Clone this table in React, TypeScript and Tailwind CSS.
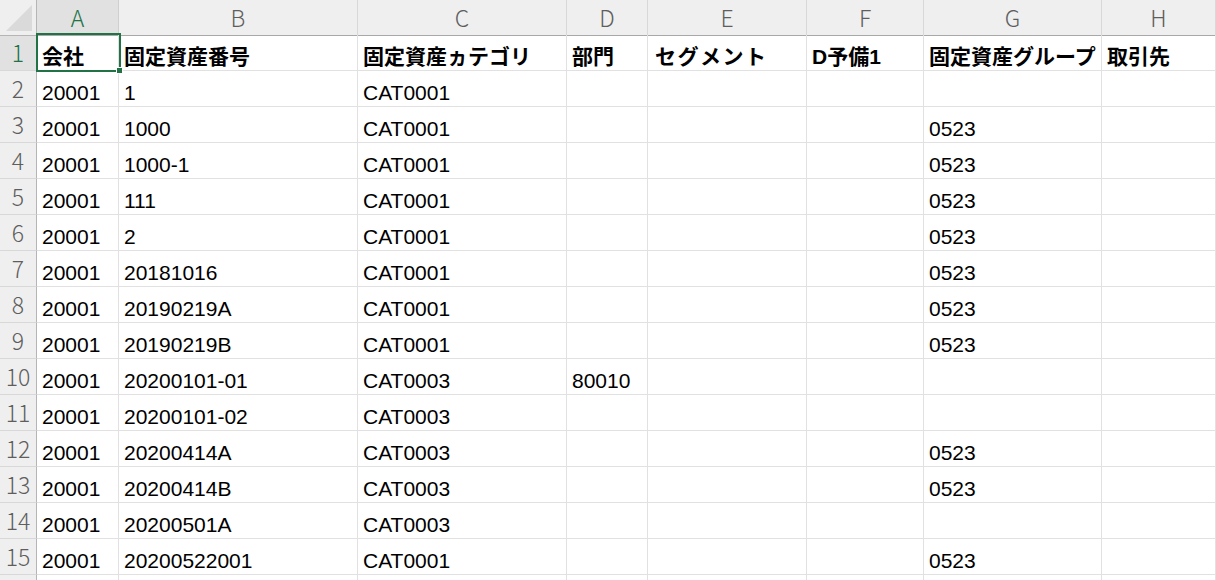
import React from "react";

const cols = ["A", "B", "C", "D", "E", "F", "G", "H"];
const headers = ["会社", "固定資産番号", "固定資産ヵテゴリ", "部門", "セグメント", "D予備1", "固定資産グループ", "取引先"];

const rows: string[][] = [
  ["20001", "1", "CAT0001", "", "", "", "", ""],
  ["20001", "1000", "CAT0001", "", "", "", "0523", ""],
  ["20001", "1000-1", "CAT0001", "", "", "", "0523", ""],
  ["20001", "111", "CAT0001", "", "", "", "0523", ""],
  ["20001", "2", "CAT0001", "", "", "", "0523", ""],
  ["20001", "20181016", "CAT0001", "", "", "", "0523", ""],
  ["20001", "20190219A", "CAT0001", "", "", "", "0523", ""],
  ["20001", "20190219B", "CAT0001", "", "", "", "0523", ""],
  ["20001", "20200101-01", "CAT0003", "80010", "", "", "", ""],
  ["20001", "20200101-02", "CAT0003", "", "", "", "", ""],
  ["20001", "20200414A", "CAT0003", "", "", "", "0523", ""],
  ["20001", "20200414B", "CAT0003", "", "", "", "0523", ""],
  ["20001", "20200501A", "CAT0003", "", "", "", "", ""],
  ["20001", "20200522001", "CAT0001", "", "", "", "0523", ""],
  ["", "", "", "", "", "", "", ""],
];

const gridCols = "grid grid-cols-[37px_82px_239px_209px_81px_159px_117px_178px_1fr]";
const hdrFont = { fontFamily: '"Noto Sans CJK JP", "Noto Sans", sans-serif' };

export default function App() {
  return (
    <div className="relative w-[1216px] h-[580px] overflow-hidden bg-white">
      {/* column header row */}
      <div className={`${gridCols} h-[35px]`}>
        <div className="relative bg-[#efefef] border-r border-b border-[#b5b5b5]">
          <div className="absolute right-[4px] bottom-[4px] w-0 h-0 border-l-[26px] border-l-transparent border-b-[26px] border-b-[#dadada]" />
        </div>
        {cols.map((c, i) => (
          <div
            key={c}
            style={hdrFont}
            className={`flex items-center justify-center border-b text-[23px] font-light ${
              i === 0
                ? "bg-[#e1e1e1] text-[#217346] border-r border-r-[#cfcfcf] border-b-[#a8a8a8]"
                : "bg-[#efefef] text-[#5e5e5e] border-r border-r-[#d8d8d8] border-b-[#a8a8a8]"
            }`}
          >
            {c}
          </div>
        ))}
      </div>

      {/* row 1 headers */}
      <div className={`${gridCols} h-[36px]`}>
        <div
          style={hdrFont}
          className="flex items-center justify-center bg-[#e1e1e1] text-[#217346] text-[23px] font-light border-r border-r-[#b5b5b5] border-b border-b-[#d8d8d8]"
        >
          1
        </div>
        {headers.map((h, i) => (
          <div
            key={i}
            style={{ fontFamily: '"Liberation Sans", "Noto Sans CJK JP", sans-serif' }}
            className="flex items-end pl-[5px] pb-[1px] leading-[24px] text-[21px] font-bold text-black whitespace-nowrap overflow-visible border-r border-b border-[#e1e1e1]"
          >
            <span className={i === 4 ? "tracking-[1.5px] pl-[2px]" : ""}>{h}</span>
          </div>
        ))}
      </div>

      {rows.map((r, ri) => (
        <div key={ri} className={`${gridCols} h-[36px]`}>
          <div
            style={hdrFont}
            className="flex items-center justify-center bg-[#efefef] text-[#5e5e5e] text-[23px] font-light border-r border-r-[#b5b5b5] border-b border-b-[#d8d8d8]"
          >
            {ri < 14 ? ri + 2 : ""}
          </div>
          {r.map((v, ci) => (
            <div
              key={ci}
              style={{ fontFamily: '"Liberation Sans", Arial, sans-serif' }}
              className="flex items-end pl-[5px] pb-[1px] leading-[24px] text-[21px] text-black whitespace-nowrap border-r border-b border-[#e1e1e1]"
            >
              {v}
            </div>
          ))}
        </div>
      ))}

      {/* selection box on A1 */}
      <div className="absolute left-[36px] top-[33px] w-[85px] h-[39px] border-2 border-[#217346] pointer-events-none" />
      <div className="absolute left-[116px] top-[67px] w-[7px] h-[7px] bg-[#217346] border border-white pointer-events-none" />
    </div>
  );
}
